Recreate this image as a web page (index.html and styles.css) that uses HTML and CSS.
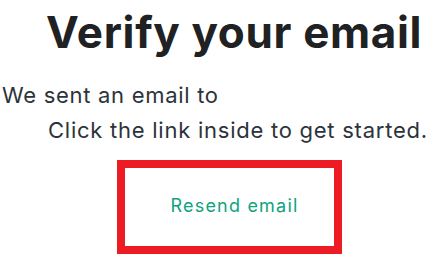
FILE: index.html
```html
<!DOCTYPE html>
<html>
<head>
<meta charset="utf-8">
<link rel="stylesheet" href="styles.css">
</head>
<body>
<main class="page">
  <h1 class="title">Verify your email</h1>
  <p class="sent">We sent an email to</p>
  <p class="hint">Click the link inside to get started.</p>
  <div class="box">
    <button class="resend">Resend email</button>
  </div>
</main>
</body>
</html>
```

FILE: styles.css
```css
html, body {
  margin: 0;
  padding: 0;
  background: #ffffff;
}
.page {
  width: 433px;
  height: 260px;
  overflow: hidden;
  font-family: Inter, "Noto Sans", sans-serif;
  color: #2d333a;
  display: flex;
  flex-direction: column;
  align-items: flex-start;
}
.title {
  margin: 6px 0 0 46px;
  font-size: 44px;
  line-height: 52px;
  font-weight: 700;
  color: #202123;
  letter-spacing: 0.65px;
  white-space: nowrap;
}
.sent {
  margin: 23px 0 0 2px;
  font-size: 22px;
  line-height: 28px;
  letter-spacing: 0.7px;
  white-space: nowrap;
}
.hint {
  margin: 7px 0 0 48px;
  font-size: 22px;
  line-height: 28px;
  letter-spacing: 0.75px;
  white-space: nowrap;
}
.box {
  margin: 16px 0 0 117px;
  width: 225px;
  height: 94px;
  box-sizing: border-box;
  border: 8px solid #ed1c24;
  display: flex;
  align-items: center;
  justify-content: center;
}
.resend {
  background: none;
  border: none;
  padding: 0;
  font-family: Inter, "Noto Sans", sans-serif;
  font-size: 18px;
  letter-spacing: 1.2px;
  color: #10a37f;
  cursor: pointer;
  margin: -4px 0 0 10px;
}
```
